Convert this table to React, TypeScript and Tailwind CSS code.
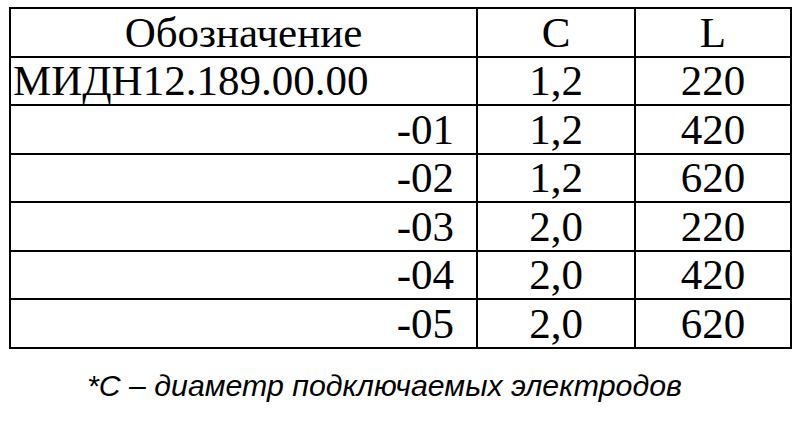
const rows = [
  { code: "МИДН12.189.00.00", c: "1,2", l: "220", main: true },
  { code: "-01", c: "1,2", l: "420" },
  { code: "-02", c: "1,2", l: "620" },
  { code: "-03", c: "2,0", l: "220" },
  { code: "-04", c: "2,0", l: "420" },
  { code: "-05", c: "2,0", l: "620" },
]

const cell = "border-2 border-black p-0 font-['Liberation_Serif','Times_New_Roman',serif]"

export default function App() {
  return (
    <div className="w-[796px] h-[437px] bg-white text-black overflow-hidden">
      <div className="pt-[7px] pl-[9px]">
        <table className="border-collapse border-2 border-black text-[43px] leading-none font-['Liberation_Serif','Times_New_Roman',serif]">
          <colgroup>
            <col className="w-[467px]" />
            <col className="w-[158px]" />
            <col className="w-[156px]" />
          </colgroup>
          <thead>
            <tr className="h-[48.5px]">
              <th className={`${cell} font-normal text-center`}>Обозначение</th>
              <th className={`${cell} font-normal text-center`}>C</th>
              <th className={`${cell} font-normal text-center`}>L</th>
            </tr>
          </thead>
          <tbody>
            {rows.map((r) => (
              <tr key={r.code} className="h-[48.5px]">
                <td className={r.main ? `${cell} text-left pl-[2px] whitespace-nowrap` : `${cell} text-right pr-[22px]`}>
                  {r.code}
                </td>
                <td className={`${cell} text-center`}>{r.c}</td>
                <td className={`${cell} text-center`}>{r.l}</td>
              </tr>
            ))}
          </tbody>
        </table>
      </div>
      <p className="mt-[22px] pl-[87px] italic text-[30.3px] leading-none font-['Liberation_Sans',Arial,sans-serif]">
        *C – диаметр подключаемых электродов
      </p>
    </div>
  )
}
